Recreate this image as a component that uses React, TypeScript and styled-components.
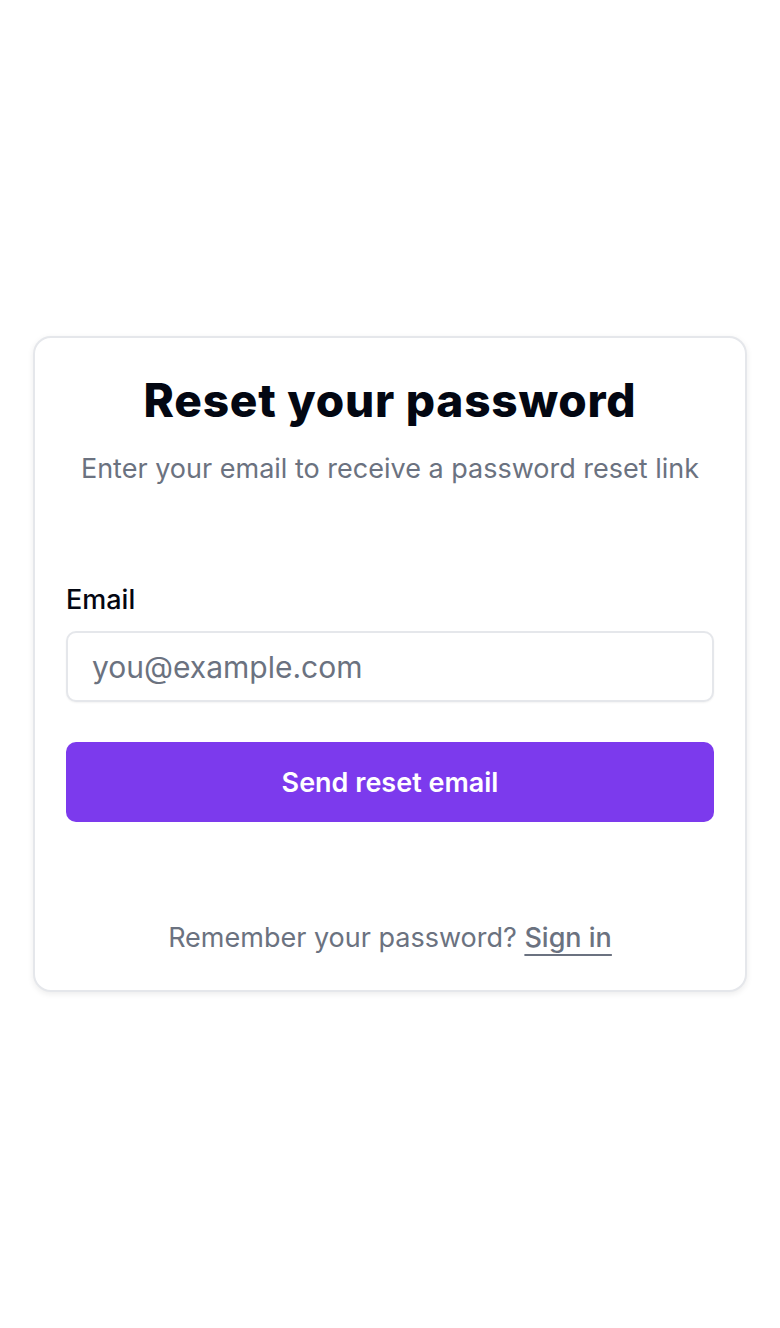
import React from 'react';
import styled, { createGlobalStyle } from 'styled-components';

const GlobalStyle = createGlobalStyle`
  * {
    box-sizing: border-box;
  }

  body {
    margin: 0;
    background: #ffffff;
    font-family: Inter, "Liberation Sans", sans-serif;
    -webkit-font-smoothing: antialiased;
  }
`;

const Page = styled.main`
  min-height: 1328px;
  display: flex;
  align-items: center;
  justify-content: center;
  padding: 0 33px;
`;

const Card = styled.section`
  width: 100%;
  background: #ffffff;
  border: 2px solid #e5e7eb;
  border-radius: 18px;
  box-shadow: 0 2px 6px rgba(0, 0, 0, 0.08);
  padding: 34px 31px 34px;
`;

const Header = styled.header`
  text-align: center;
  margin-bottom: 95px;
`;

const Title = styled.h1`
  margin: 0;
  font-size: 46px;
  line-height: 56px;
  font-weight: 800;
  letter-spacing: 0.75px;
  color: #030712;
`;

const Subtitle = styled.p`
  margin: 23px 0 0;
  font-size: 27px;
  line-height: 36px;
  color: #6b7280;
`;

const Form = styled.form`
  display: flex;
  flex-direction: column;
`;

const Label = styled.label`
  font-size: 27px;
  line-height: 36px;
  font-weight: 500;
  color: #030712;
  margin-bottom: 13px;
`;

const Input = styled.input`
  height: 71px;
  width: 100%;
  border: 2px solid #e5e7eb;
  border-radius: 10px;
  padding: 0 24px;
  font-family: inherit;
  font-size: 30px;
  color: #030712;
  box-shadow: 0 1px 2px rgba(0, 0, 0, 0.05);
  outline: none;

  &::placeholder {
    color: #6b7280;
  }
`;

const SubmitButton = styled.button`
  margin-top: 40px;
  height: 80px;
  width: 100%;
  border: none;
  border-radius: 10px;
  background: #7c3aed;
  color: #ffffff;
  font-family: inherit;
  font-size: 27px;
  font-weight: 600;
  cursor: pointer;
`;

const Footer = styled.p`
  margin: 98px 0 0;
  text-align: center;
  font-size: 27px;
  line-height: 36px;
  color: #6b7280;
`;

const FooterLink = styled.a`
  color: #6b7280;
  font-weight: 500;
  text-decoration: underline;
  text-underline-offset: 7px;
  text-decoration-thickness: 2px;
`;

export default function App() {
  return (
    <>
      <GlobalStyle />
      <Page>
        <Card>
          <Header>
            <Title>Reset your password</Title>
            <Subtitle>Enter your email to receive a password reset link</Subtitle>
          </Header>
          <Form onSubmit={(e) => e.preventDefault()}>
            <Label htmlFor="email">Email</Label>
            <Input id="email" type="email" placeholder="you@example.com" />
            <SubmitButton type="submit">Send reset email</SubmitButton>
          </Form>
          <Footer>
            Remember your password? <FooterLink href="#">Sign in</FooterLink>
          </Footer>
        </Card>
      </Page>
    </>
  );
}
